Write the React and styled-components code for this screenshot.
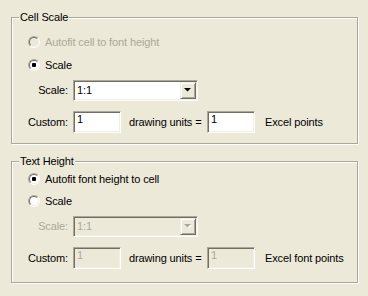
import React from "react";
import styled, { createGlobalStyle } from "styled-components";

const Global = createGlobalStyle`
  html, body {
    margin: 0;
    padding: 0;
    background: #ece9d8;
  }
  body {
    font-family: "Liberation Sans", Arial, sans-serif;
    font-size: 11px;
    line-height: 13px;
    letter-spacing: -0.12px;
    color: #000;
  }
`;

const Page = styled.div`
  width: 368px;
  height: 296px;
  box-sizing: border-box;
  padding: 17px 10px 0 11px;
  display: flex;
  flex-direction: column;
  gap: 17px;
`;

const Group = styled.div`
  position: relative;
  height: ${p => p.$h}px;
  box-sizing: border-box;
  border: 1px solid #aca899;
  box-shadow: inset 1px 1px 0 #fff, 1px 1px 0 #fff;
  padding-top: ${p => p.$top}px;
  display: flex;
  flex-direction: column;
`;

const Legend = styled.span`
  position: absolute;
  top: -1px;
  left: 7px;
  transform: translateY(-50%);
  padding: 0 1px;
  background: #ece9d8;
`;

const RadioRow = styled.label`
  display: flex;
  align-items: center;
  height: 16px;
  padding-left: 16px;
  margin-top: ${p => p.$mt || 0}px;
  color: ${p => (p.$disabled ? "#aca899" : "#000")};
`;

const RadioCircle = styled.span`
  position: relative;
  width: 12px;
  height: 12px;
  box-sizing: border-box;
  border-radius: 50%;
  border: 1px solid;
  border-color: #aca899 #fff #fff #aca899;
  margin-right: 5px;
  flex-shrink: 0;

  &::before {
    content: "";
    position: absolute;
    inset: 0;
    border-radius: 50%;
    border: 1px solid;
    border-color: #716f64 #f1efe2 #f1efe2 #716f64;
    background: ${p => (p.$disabled ? "#ece9d8" : "#fff")};
  }

  &::after {
    content: "";
    display: ${p => (p.$checked ? "block" : "none")};
    position: absolute;
    left: 3px;
    top: 3px;
    width: 4px;
    height: 4px;
    border-radius: 1px;
    background: #000;
  }
`;

const FieldRow = styled.div`
  display: flex;
  align-items: center;
  margin-top: ${p => p.$mt || 0}px;
`;

const Label = styled.span`
  width: 56px;
  margin-right: 5px;
  text-align: right;
  color: ${p => (p.$disabled ? "#aca899" : "#000")};
`;

const Sunken = styled.div`
  box-sizing: border-box;
  border: 1px solid;
  border-color: #aca899 #fff #fff #aca899;
  box-shadow: inset 1px 1px 0 #716f64, inset -1px -1px 0 #f1efe2;
  background: ${p => (p.$disabled ? "#ece9d8" : "#fff")};
  color: ${p => (p.$disabled ? "#aca899" : "#000")};
  padding: 1px;
  display: flex;
`;

const Combo = styled(Sunken)`
  width: 125px;
  height: 21px;
  align-items: center;
`;

const ComboValue = styled.span`
  flex: 1;
  padding-left: 2px;
`;

const DropButton = styled.span`
  width: 16px;
  height: 17px;
  box-sizing: border-box;
  background: #ece9d8;
  border: 1px solid;
  border-color: #f1efe2 #716f64 #716f64 #f1efe2;
  box-shadow: inset 1px 1px 0 #fff, inset -1px -1px 0 #aca899;
  display: flex;
  align-items: center;
  justify-content: center;
`;

const Edit = styled(Sunken)`
  width: 48px;
  height: 22px;
  align-items: flex-start;
  padding: 1px 1px 1px 3px;
`;

const Text = styled.span`
  margin-left: ${p => p.$ml || 0}px;
  width: ${p => (p.$w ? `${p.$w}px` : "auto")};
  white-space: nowrap;
`;

function Arrow({ disabled }) {
  return (
    <svg width="8" height="5" viewBox="0 0 8 5">
      {disabled && <polygon points="1,1 8,1 4.5,4.5" fill="#fff" />}
      <polygon points="0,0 7,0 3.5,3.5" fill={disabled ? "#aca899" : "#000"} />
    </svg>
  );
}

function Radio({ checked, disabled, children, mt }) {
  return (
    <RadioRow $disabled={disabled} $mt={mt}>
      <RadioCircle $checked={checked} $disabled={disabled} />
      {children}
    </RadioRow>
  );
}

function ScaleFields({ disabled, unit, comboMt, customMt }) {
  return (
    <>
      <FieldRow $mt={comboMt}>
        <Label $disabled={disabled}>Scale:</Label>
        <Combo $disabled={disabled}>
          <ComboValue>1:1</ComboValue>
          <DropButton>
            <Arrow disabled={disabled} />
          </DropButton>
        </Combo>
      </FieldRow>
      <FieldRow $mt={customMt}>
        <Label>Custom:</Label>
        <Edit $disabled={disabled}>1</Edit>
        <Text $ml={8} $w={78}>drawing units =</Text>
        <Edit $disabled={disabled}>1</Edit>
        <Text $ml={10}>{unit}</Text>
      </FieldRow>
    </>
  );
}

export default function App() {
  return (
    <>
      <Global />
      <Page>
        <Group $h={127} $top={16}>
          <Legend>Cell Scale</Legend>
          <Radio disabled>Autofit cell to font height</Radio>
          <Radio checked mt={7}>Scale</Radio>
          <ScaleFields comboMt={7} customMt={10} unit="Excel points" />
        </Group>
        <Group $h={122} $top={9}>
          <Legend>Text Height</Legend>
          <Radio checked>Autofit font height to cell</Radio>
          <Radio mt={6}>Scale</Radio>
          <ScaleFields disabled comboMt={7} customMt={10} unit="Excel font points" />
        </Group>
      </Page>
    </>
  );
}
